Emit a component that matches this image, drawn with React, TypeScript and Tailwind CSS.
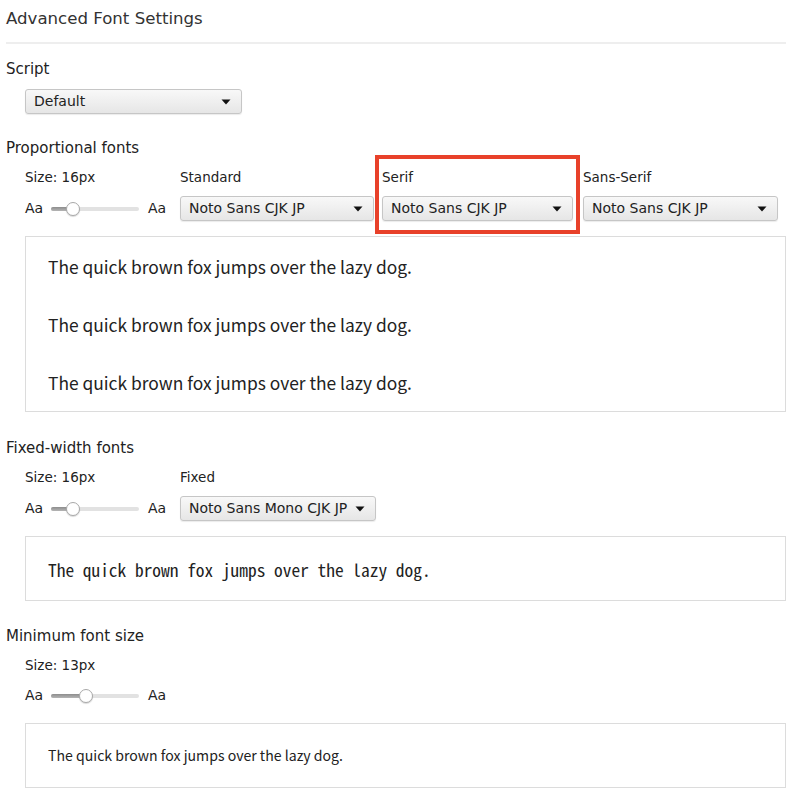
import React from "react";

const UI = { fontFamily: '"DejaVu Sans", "Liberation Sans", sans-serif' };
const SAMPLE = { fontFamily: '"Noto Sans CJK JP", "Noto Sans", sans-serif' };
const MONO = { fontFamily: '"Noto Sans Mono CJK JP", "DejaVu Sans Mono", monospace' };

function Select({ label, width }: { label: string; width: string }) {
  return (
    <div
      className={`${width} h-[25px] flex items-center justify-between pl-[8px] pr-[10px] rounded-[3px] border border-[#c6c6c6] bg-gradient-to-b from-[#f8f8f8] to-[#e6e6e6] shadow-[0_1px_1px_rgba(0,0,0,0.08)] text-[14px] text-[#222]`}
    >
      <span className="whitespace-nowrap">{label}</span>
      <svg width="10" height="6" viewBox="0 0 10 6">
        <path d="M0.5 0.5 L9.5 0.5 L5 5.5 Z" fill="#111" />
      </svg>
    </div>
  );
}

function Slider({ pos }: { pos: number }) {
  return (
    <div className="flex items-center h-[25px] text-[14px] text-[#222]">
      <span className="w-[26px]">Aa</span>
      <div className="relative w-[88px] h-[16px] flex items-center">
        <div className="w-full h-[4px] rounded-full bg-[#e2e2e2]" />
        <div
          className="absolute left-0 h-[4px] rounded-full bg-gradient-to-b from-[#8d8d8d] to-[#b5b5b5]"
          style={{ width: pos }}
        />
        <div
          className="absolute w-[14px] h-[14px] rounded-full bg-white border border-[#a9a9a9] shadow-[0_1px_1px_rgba(0,0,0,0.15)]"
          style={{ left: pos - 7 }}
        />
      </div>
      <span className="ml-[9px]">Aa</span>
    </div>
  );
}

export default function App() {
  return (
    <div className="w-[800px] h-[800px] bg-white text-[#222] overflow-hidden" style={UI}>
      <div className="pl-[6px] pr-[14px]">
        <div className="h-[42px] pt-[8px] leading-[22px] text-[16.6px] text-[#333]">
          Advanced Font Settings
        </div>
        <div className="h-[2px] bg-[#eeeeee]" />

        {/* Script */}
        <div className="mt-[15px] text-[15px] leading-[20px]">Script</div>
        <div className="mt-[10px] ml-[19px]">
          <Select label="Default" width="w-[217px]" />
        </div>

        {/* Proportional */}
        <div className="mt-[24px] text-[15px] leading-[20px]">Proportional fonts</div>
        <div className="ml-[19px] mt-[10px] flex">
          <div className="w-[155px] flex flex-col">
            <div className="h-[18px] leading-[18px] text-[13.5px]">Size: 16px</div>
            <div className="mt-[10px]">
              <Slider pos={22} />
            </div>
          </div>
          <div className="w-[194px] flex flex-col">
            <div className="h-[18px] leading-[18px] text-[13.5px]">Standard</div>
            <div className="mt-[10px]">
              <Select label="Noto Sans CJK JP" width="w-[194px]" />
            </div>
          </div>
          <div className="ml-[8px] w-[191px] flex flex-col relative">
            <div className="absolute left-[-7px] top-[-13px] right-[-7px] bottom-[-13px] border-[4px] border-[#e8412a]" />
            <div className="h-[18px] leading-[18px] text-[13.5px]">Serif</div>
            <div className="mt-[10px]">
              <Select label="Noto Sans CJK JP" width="w-[191px]" />
            </div>
          </div>
          <div className="ml-[10px] w-[195px] flex flex-col">
            <div className="h-[18px] leading-[18px] text-[13.5px]">Sans-Serif</div>
            <div className="mt-[10px]">
              <Select label="Noto Sans CJK JP" width="w-[195px]" />
            </div>
          </div>
        </div>
        <div
          className="ml-[19px] mt-[15px] h-[176px] border border-[#dcdcdc] pl-[22px] pt-[18px] text-[17.4px] text-[#222] flex flex-col gap-[34px]"
          style={SAMPLE}
        >
          <div className="leading-[24px]">The quick brown fox jumps over the lazy dog.</div>
          <div className="leading-[24px]">The quick brown fox jumps over the lazy dog.</div>
          <div className="leading-[24px]">The quick brown fox jumps over the lazy dog.</div>
        </div>

        {/* Fixed */}
        <div className="mt-[26px] text-[15px] leading-[20px]">Fixed-width fonts</div>
        <div className="ml-[19px] mt-[10px] flex">
          <div className="w-[155px] flex flex-col">
            <div className="h-[18px] leading-[18px] text-[13.5px]">Size: 16px</div>
            <div className="mt-[10px]">
              <Slider pos={22} />
            </div>
          </div>
          <div className="flex flex-col">
            <div className="h-[18px] leading-[18px] text-[13.5px]">Fixed</div>
            <div className="mt-[10px]">
              <Select label="Noto Sans Mono CJK JP" width="w-[196px]" />
            </div>
          </div>
        </div>
        <div
          className="ml-[19px] mt-[15px] h-[65px] border border-[#dcdcdc] pl-[22px] pt-[3px] flex items-center text-[17.4px] text-[#222]"
          style={MONO}
        >
          The quick brown fox jumps over the lazy dog.
        </div>

        {/* Minimum */}
        <div className="mt-[25px] text-[15px] leading-[20px]">Minimum font size</div>
        <div className="ml-[19px] mt-[10px] flex flex-col">
          <div className="h-[18px] leading-[18px] text-[13.5px]">Size: 13px</div>
          <div className="mt-[9px]">
            <Slider pos={35} />
          </div>
        </div>
        <div
          className="ml-[19px] mt-[15px] h-[65px] border border-[#dcdcdc] pl-[22px] flex items-center text-[14.1px] text-[#222]"
          style={SAMPLE}
        >
          The quick brown fox jumps over the lazy dog.
        </div>
      </div>
    </div>
  );
}
